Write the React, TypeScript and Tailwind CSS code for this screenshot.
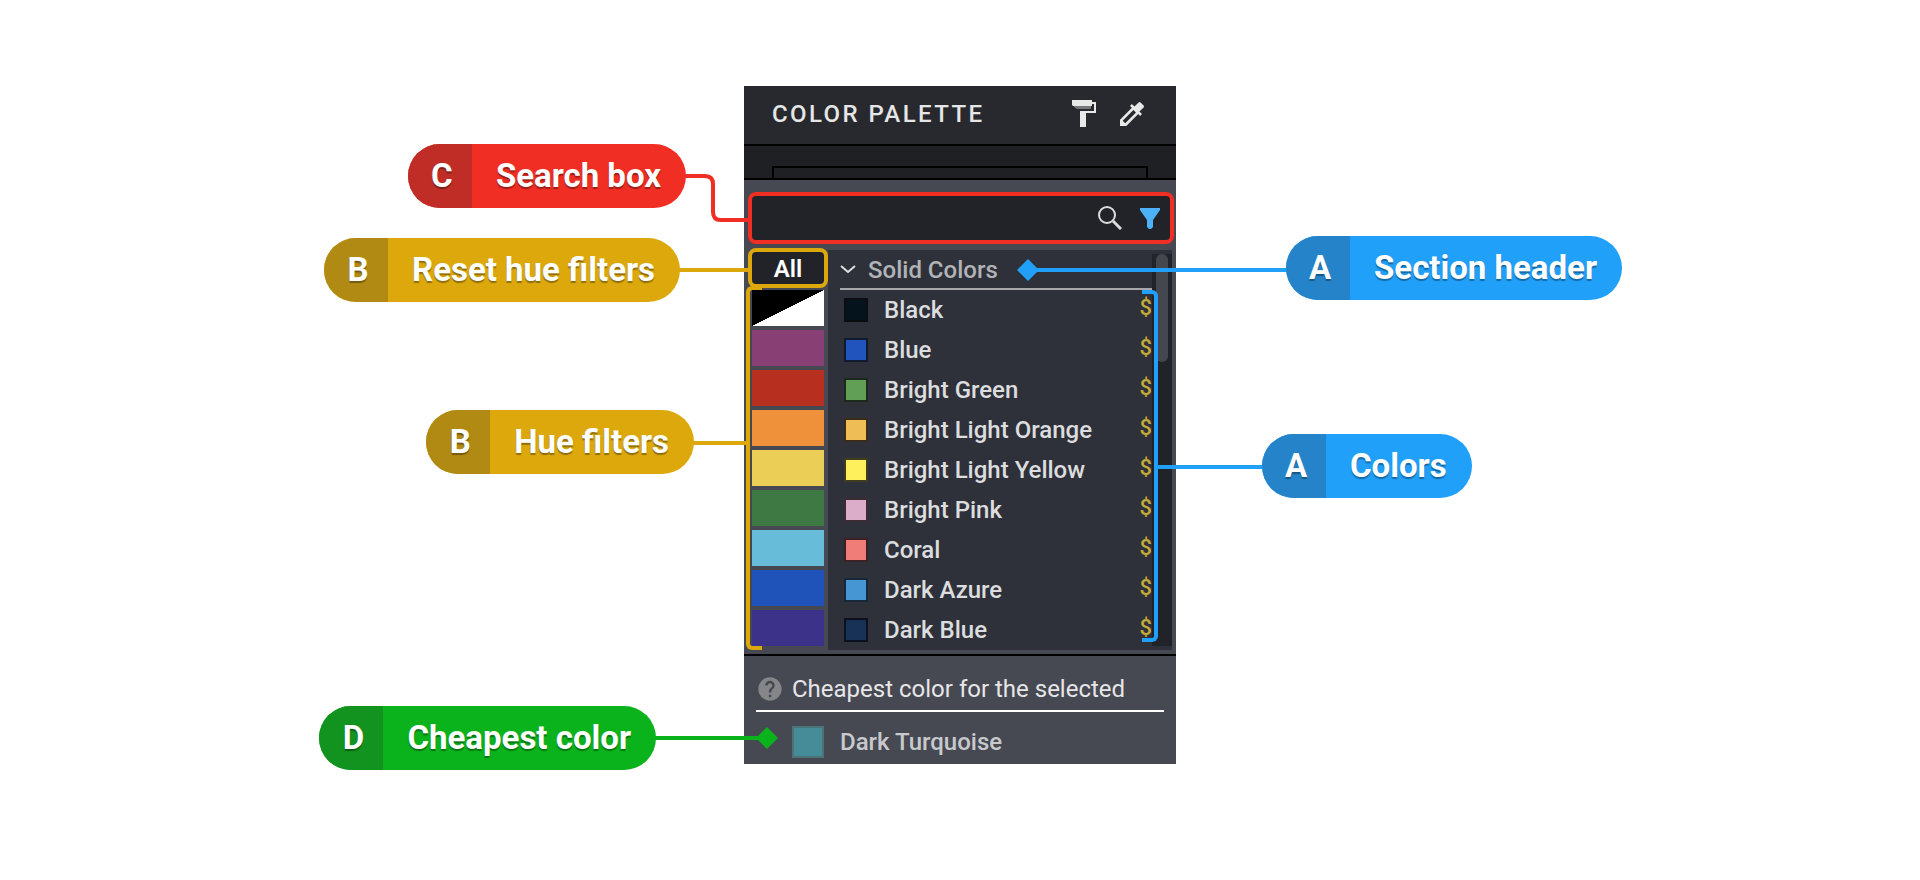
import type { ReactNode } from "react";
import { MdColorize, MdHelp } from "react-icons/md";

const HUES = [
  { name: "Purple", className: "bg-[#873f74]" },
  { name: "Red", className: "bg-[#b62f1f]" },
  { name: "Orange", className: "bg-[#ee913a]" },
  { name: "Yellow", className: "bg-[#eace55]" },
  { name: "Green", className: "bg-[#3e7843]" },
  { name: "Azure", className: "bg-[#67bcd9]" },
  { name: "Blue", className: "bg-[#2053b9]" },
  { name: "Indigo", className: "bg-[#3c3289]" },
];

const COLORS = [
  { name: "Black", className: "bg-[#05131d] border-[#0a0d12]" },
  { name: "Blue", className: "bg-[#2155bd] border-[#0f1a30]" },
  { name: "Bright Green", className: "bg-[#609f55] border-[#1c2a1e]" },
  { name: "Bright Light Orange", className: "bg-[#efbd56] border-[#3a2c18]" },
  { name: "Bright Light Yellow", className: "bg-[#fdf05c] border-[#3f3c20]" },
  { name: "Bright Pink", className: "bg-[#dcadc8] border-[#3a2b35]" },
  { name: "Coral", className: "bg-[#f07d77] border-[#3c2023]" },
  { name: "Dark Azure", className: "bg-[#4596d3] border-[#16283a]" },
  { name: "Dark Blue", className: "bg-[#183157] border-[#0c121d]" },
];

interface PillProps {
  letter: string;
  text: string;
  className: string;
  letterClassName: string;
}

function Pill({ letter, text, className, letterClassName }: PillProps) {
  return (
    <div
      className={`flex h-16 items-center overflow-hidden rounded-full text-[33px] leading-10 font-bold whitespace-nowrap text-white text-shadow-[0_2px_1px_rgb(0_0_0/0.35)] ${className}`}
    >
      <span className={`flex h-16 w-16 items-center justify-center pl-1 ${letterClassName}`}>
        {letter}
      </span>
      <span className="pr-[25px] pl-6">{text}</span>
    </div>
  );
}

interface ConnectorProps {
  className: string;
  children: ReactNode;
}

function Connector({ className, children }: ConnectorProps) {
  return (
    <svg
      className={`h-16 shrink-0 overflow-visible ${className}`}
      fill="none"
      stroke="currentColor"
      strokeWidth="4"
      aria-hidden="true"
    >
      {children}
    </svg>
  );
}

function PalettePanel() {
  return (
    <main className="bg-[#464852] text-[24px] leading-8 text-[#dcdddf]">
      <header className="flex h-[60px] items-center border-b-2 border-black bg-[#28292e] px-7 pb-[2px]">
        <h1 className="flex-1 font-medium tracking-widest text-[#e6e6e6]">COLOR PALETTE</h1>
        <div className="flex items-center gap-4 text-[#e8e8e8]">
          <button aria-label="Paint" className="h-8 w-8">
            <svg viewBox="0 0 32 32" className="h-8 w-8" aria-hidden="true">
              <path d="M6 5h17v6H9L6 9z" fill="#77787b" />
              <path d="M4 2h20v6H5L4 7z" fill="currentColor" />
              <path d="M24 5h3v9H15v3" fill="none" stroke="currentColor" strokeWidth="2" />
              <path d="M12 13h6v16h-6z" fill="currentColor" />
            </svg>
          </button>
          <button aria-label="Pick color" className="h-8 w-8">
            <MdColorize className="h-8 w-8" />
          </button>
        </div>
      </header>

      <div className="border-b-2 border-black bg-[#1f2024] px-7 pt-5">
        <div className="h-3 border-2 border-b-0 border-black" />
      </div>

      <div className="pt-3">
        <label className="mr-[2px] ml-1 flex h-[52px] items-center gap-4 rounded-lg border-4 border-[#f02e23] bg-[#222328] pr-2">
          <input aria-label="Search colors" className="min-w-0 flex-1 bg-transparent px-4 outline-none" />
          <svg viewBox="0 0 24 24" className="h-6 w-6 text-[#dcdcdc]" fill="none" stroke="currentColor" aria-hidden="true">
            <circle cx="9" cy="9" r="8" strokeWidth="2" />
            <path d="M15 15l8 8" strokeWidth="3" />
          </svg>
          <svg viewBox="0 0 24 24" className="h-6 w-6 text-[#4db1fa]" aria-hidden="true">
            <path d="M2 2h20v2l-7 10v7l-2 2h-2l-2-2v-7L2 4z" fill="currentColor" />
          </svg>
        </label>
      </div>

      <div className="flex border-b-2 border-black px-1 pt-1 pb-1">
        <div className="relative w-20 shrink-0">
          <button className="flex h-10 w-20 items-center justify-center rounded-lg border-4 border-[#dca80c] bg-[#222328] pt-[2px] font-semibold text-white">
            All
          </button>
          <div className="flex flex-col gap-1 px-1 pt-[2px]">
            <button
              aria-label="Black and white"
              className="h-9 bg-[linear-gradient(to_bottom_right,#000_50%,#fff_50%)]"
            />
            {HUES.map((hue) => (
              <button key={hue.name} aria-label={hue.name} className={`h-9 ${hue.className}`} />
            ))}
          </div>
          <div className="pointer-events-none absolute top-[38px] -left-[2px] h-[364px] w-4 rounded-l-md border-4 border-r-0 border-[#dca80c]" />
        </div>

        <section className="relative mt-[2px] flex h-[400px] flex-1 bg-[#2f313a]">
          <div className="flex-1 pl-3">
            <h2>
              <button className="flex h-10 w-full items-center gap-3 border-b-2 border-[#a6a7ab] pt-[2px] font-medium text-[#b2b3b7]">
                <svg viewBox="0 0 16 16" className="h-4 w-4" fill="none" stroke="#e0e0e0" strokeWidth="2" aria-hidden="true">
                  <path d="M1 4l7 6 7-6" />
                </svg>
                Solid Colors
              </button>
            </h2>
            <ul>
              {COLORS.map((color) => (
                <li key={color.name} className="flex h-10 items-center pl-1">
                  <span className={`h-6 w-6 border-2 ${color.className}`} />
                  <span className="flex-1 pl-4 font-medium">{color.name}</span>
                  <span className="self-start pt-[2px] text-[22px] font-medium text-[#c4a83a]">$</span>
                </li>
              ))}
            </ul>
          </div>
          <div className="my-1 w-5 bg-[#222328] px-1">
            <div className="h-[108px] rounded-full bg-[#45474f]" />
          </div>
          <div className="pointer-events-none absolute top-10 right-[14px] h-[352px] w-4 rounded-r-md border-4 border-l-0 border-[#21a0fa]" />
        </section>
      </div>

      <footer className="px-3 pt-3 pb-[6px]">
        <h2 className="flex h-11 items-center gap-2 border-b-2 border-white text-[#e6e6e8]">
          <MdHelp className="h-7 w-7 text-[#85858a]" />
          Cheapest color for the selected
        </h2>
        <p className="flex items-center gap-4 pt-[14px] pl-9 font-medium text-[#c8c9cc]">
          <span className="h-8 w-8 border-2 border-[#4b7479] bg-[#458c98]" />
          Dark Turquoise
        </p>
      </footer>
    </main>
  );
}

export default function App() {
  return (
    <div className="grid min-h-screen grid-cols-[1fr_432px_1fr] items-start bg-white py-[86px] font-[Roboto,sans-serif]">
      <aside className="relative z-10 -mr-1 flex flex-col items-end pt-[58px]">
        <div className="flex">
          <Pill letter="C" text="Search box" className="bg-[#f02e23]" letterClassName="bg-[#c02d27]" />
          <Connector className="w-[62px] text-[#f02e23]">
            <path d="M-1 32h20q8 0 8 8v28q0 8 8 8h29" />
          </Connector>
        </div>
        <div className="mt-[30px] flex">
          <Pill letter="B" text="Reset hue filters" className="bg-[#dca80c]" letterClassName="bg-[#b18a14]" />
          <Connector className="w-[68px] text-[#dca80c]">
            <path d="M-1 32h70" />
          </Connector>
        </div>
        <div className="mt-[108px] flex">
          <Pill letter="B" text="Hue filters" className="bg-[#dca80c]" letterClassName="bg-[#b18a14]" />
          <Connector className="w-[54px] text-[#dca80c]">
            <path d="M-1 33h54" />
          </Connector>
        </div>
        <div className="-mr-[30px] mt-[232px] flex">
          <Pill letter="D" text="Cheapest color" className="bg-[#0ab21b]" letterClassName="bg-[#12921f]" />
          <Connector className="w-[122px] text-[#0ab21b]">
            <path d="M-1 32h112" />
            <path d="M111 21l11 11-11 11-11-11z" fill="currentColor" stroke="none" />
          </Connector>
        </div>
      </aside>

      <PalettePanel />

      <aside className="relative z-10 flex flex-col items-start pt-[150px]">
        <div className="-ml-[159px] flex">
          <Connector className="w-[269px] text-[#21a0fa]">
            <path d="M11 34h259" />
            <path d="M11 23l11 11-11 11-11-11z" fill="currentColor" stroke="none" />
          </Connector>
          <Pill letter="A" text="Section header" className="bg-[#21a0fa]" letterClassName="bg-[#2584c9]" />
        </div>
        <div className="-ml-[18px] mt-[134px] flex">
          <Connector className="w-[104px] text-[#21a0fa]">
            <path d="M-1 33h106" />
          </Connector>
          <Pill letter="A" text="Colors" className="bg-[#21a0fa]" letterClassName="bg-[#2584c9]" />
        </div>
      </aside>
    </div>
  );
}
